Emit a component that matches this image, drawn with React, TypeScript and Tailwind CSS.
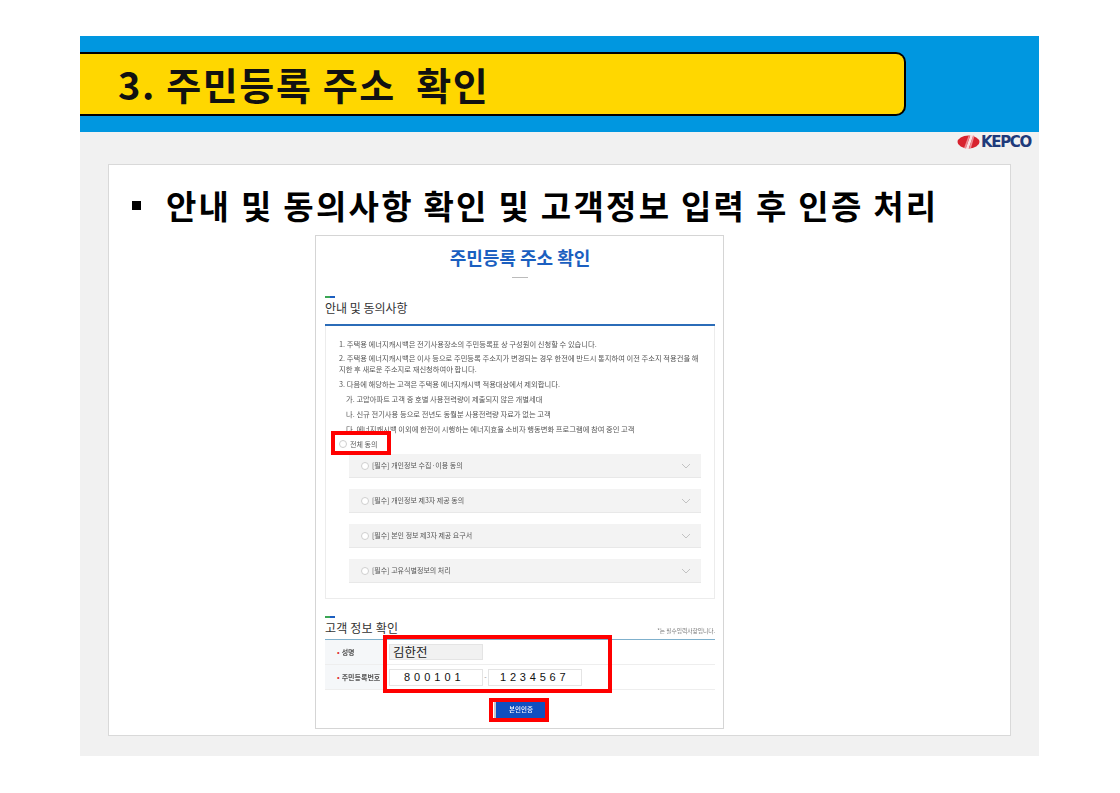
import React from "react";

const font = { fontFamily: '"Noto Sans CJK KR", "Noto Sans", sans-serif' };

function Radio({ className = "" }: { className?: string }) {
  return <span className={"block w-[8px] h-[8px] rounded-full border border-[#cfcfcf] bg-white shrink-0 " + className} />;
}

function Row({ label }: { label: string }) {
  return (
    <div className="h-[24px] bg-[#f3f3f3] border-b border-[#e8e8e8] flex items-center pl-[12px] pr-[10px]">
      <Radio />
      <span className="ml-[3px] text-[7px] text-[#555] blur-[0.25px]">{label}</span>
      <svg className="ml-auto" width="10" height="6" viewBox="0 0 10 6" fill="none" stroke="#b5b5b5" strokeWidth="0.8">
        <path d="M1 1l4 4 4-4" />
      </svg>
    </div>
  );
}

function Tick() {
  return (
    <div className="flex w-[10px] h-[2px]">
      <span className="w-[5px] bg-[#3aa655]" />
      <span className="w-[5px] bg-[#1b5fc0]" />
    </div>
  );
}

function Logo() {
  return (
    <div className="flex items-center h-[14px]">
      <svg width="24" height="14" viewBox="0 0 24 14" className="shrink-0">
        <ellipse cx="11.5" cy="7" rx="11" ry="6.5" fill="#d8222e" />
        <path d="M8.5 14 L13.5 0 L16.5 0 L11.5 14 Z" fill="#f9dfe1" />
        <path d="M7 13 L11.5 1 L13 0.5 L9 13.5 Z" fill="#ee8a92" />
        <path d="M12 13.5 L16 0.5 L17.5 1 L14 13 Z" fill="#ee8a92" />
      </svg>
      <span className="text-[15px] leading-[14px] font-bold tracking-[-1.3px] text-[#1e3a7b]" style={{ fontFamily: '"DejaVu Sans", sans-serif' }}>KEPCO</span>
    </div>
  );
}

export default function App() {
  return (
    <div className="w-[1120px] h-[793px] bg-white overflow-hidden pt-[36px] pl-[80px]" style={font}>
      <div className="w-[959px] h-[720px] bg-[#f1f1f1] flex flex-col">
        <header className="h-[96px] bg-[#0097e0] py-[16px] shrink-0">
          <div className="w-[826px] h-[64px] bg-[#ffd700] border-2 border-l-0 border-black rounded-r-[10px] flex items-center pl-[38px]">
            <h1 className="text-[38px] leading-none font-bold tracking-[1.6px] text-[#111] whitespace-pre">3. 주민등록 주소  확인</h1>
          </div>
        </header>

        <div className="h-[32px] shrink-0 flex items-start justify-end pr-[8px] pt-[3px]">
          <Logo />
        </div>

        <main className="ml-[28px] w-[903px] h-[572px] bg-white border border-[#d9d9d9] relative flex flex-col">
          <div className="flex items-center pl-[23px] pt-[19px] pb-[2px]">
            <span className="w-[9px] h-[9px] bg-black mr-[25px]" />
            <h2 className="text-[33px] leading-[42px] font-bold text-black tracking-[2.25px] whitespace-nowrap">안내 및 동의사항 확인 및 고객정보 입력 후 인증 처리</h2>
          </div>

          <section className="ml-[206px] mt-[7px] w-[409px] h-[494px] bg-white border border-[#d5d5d5] pl-[9px] pr-[8px] relative flex flex-col">
            <h3 className="mt-[7px] text-center text-[18px] leading-[28px] font-bold text-[#1b5fc0]">주민등록 주소 확인</h3>
            <div className="mx-auto mt-[6px] w-[16px] h-px bg-[#bbb]" />

            <div className="mt-[18px]"><Tick /></div>
            <div className="text-[12px] leading-[20px] text-[#333]">안내 및 동의사항</div>
            <div className="mt-[6px] h-[2px] bg-[#2b6cb8]" />

            <div className="h-[273px] border border-t-0 border-[#ececec] pl-[13px] pr-[13px] pt-[12px] text-[7px] text-[#555]">
              <div className="text-[7.3px] blur-[0.25px]">
                <p className="leading-[12px]">1. 주택용 에너지캐시백은 전기사용장소의 주민등록표 상 구성원이 신청할 수 있습니다.</p>
                <p className="leading-[11px] mt-[3px]">2. 주택용 에너지캐시백은 이사 등으로 주민등록 주소지가 변경되는 경우 한전에 반드시 통지하여 이전 주소지 적용건을 해지한 후 새로운 주소지로 재신청하여야 합니다.</p>
                <p className="leading-[12px] mt-[3px]">3. 다음에 해당하는 고객은 주택용 에너지캐시백 적용대상에서 제외합니다.</p>
                <p className="leading-[12px] mt-[3px] pl-[7px]">가. 고압아파트 고객 중 호별 사용전력량이 제출되지 않은 개별세대</p>
                <p className="leading-[12px] mt-[3px] pl-[7px]">나. 신규 전기사용 등으로 전년도 동월분 사용전력량 자료가 없는 고객</p>
                <p className="leading-[12px] mt-[3px] pl-[7px]">다. 에너지캐시백 이외에 한전이 시행하는 에너지효율 소비자 행동변화 프로그램에 참여 중인 고객</p>
              </div>
              <div className="flex items-center h-[12px] mt-[3px]">
                <Radio />
                <span className="ml-[3px] blur-[0.25px]">전체 동의</span>
              </div>
              <div className="ml-[10px] mt-[4px] flex flex-col gap-[11px]">
                <Row label="[필수] 개인정보 수집·이용 동의" />
                <Row label="[필수] 개인정보 제3자 제공 동의" />
                <Row label="[필수] 본인 정보 제3자 제공 요구서" />
                <Row label="[필수] 고유식별정보의 처리" />
              </div>
            </div>

            <div className="mt-[17px]"><Tick /></div>
            <div className="flex items-end justify-between">
              <span className="text-[12px] leading-[20px] text-[#333] tracking-[0.2px]">고객 정보 확인</span>
              <span className="text-[5.7px] leading-[10px] text-[#777] mb-[2px] blur-[0.25px]">*는 필수입력사항입니다.</span>
            </div>
            <div className="h-px bg-[#7fb0cc] mt-[1px]" />

            <div className="flex h-[25px] border-b border-[#eee]">
              <div className="w-[60px] bg-[#f5f7f9] flex items-center pl-[12px] text-[7px] font-bold text-[#555]"><span className="text-[#e03030] mr-[2px]">•</span><span className="blur-[0.25px]">성명</span></div>
              <div className="pl-[4px] flex items-center">
                <div className="w-[94px] h-[16px] bg-[#f1f1f1] border border-[#e4e4e4] flex items-center pl-[3px] text-[12.5px] text-[#222]">김한전</div>
              </div>
            </div>
            <div className="flex h-[25px] border-b border-[#eee]">
              <div className="w-[60px] bg-[#f5f7f9] flex items-center pl-[12px] text-[7px] font-bold text-[#555] whitespace-nowrap"><span className="text-[#e03030] mr-[2px]">•</span><span className="blur-[0.25px]">주민등록번호</span></div>
              <div className="pl-[4px] flex items-center" style={{ fontFamily: '"Liberation Sans", sans-serif' }}>
                <div className="w-[94px] h-[17px] bg-white border border-[#e4e4e4] flex items-center pl-[14px] text-[11px] tracking-[4px] text-[#111]">800101</div>
                <span className="w-[5px] text-center text-[7px] text-[#999]">-</span>
                <div className="w-[94px] h-[17px] bg-white border border-[#e4e4e4] flex items-center pl-[11px] text-[11px] tracking-[3.8px] text-[#111]">1234567</div>
              </div>
            </div>

            <button className="mx-auto mt-[11px] w-[52px] h-[18px] bg-[#0f4fc0] border-l-2 border-[#c9c9c9] text-white text-[6.5px] font-medium flex items-center justify-center"><span className="blur-[0.25px]">본인인증</span></button>
          </section>

          <div className="absolute left-[222px] top-[266px] w-[60px] h-[24px] border-[4px] border-[#ff0000]" />
          <div className="absolute left-[274px] top-[470px] w-[229px] h-[58px] border-[4px] border-[#ff0000]" />
          <div className="absolute left-[380px] top-[533px] w-[60px] h-[24px] border-[4px] border-[#ff0000]" />
        </main>
      </div>
    </div>
  );
}
